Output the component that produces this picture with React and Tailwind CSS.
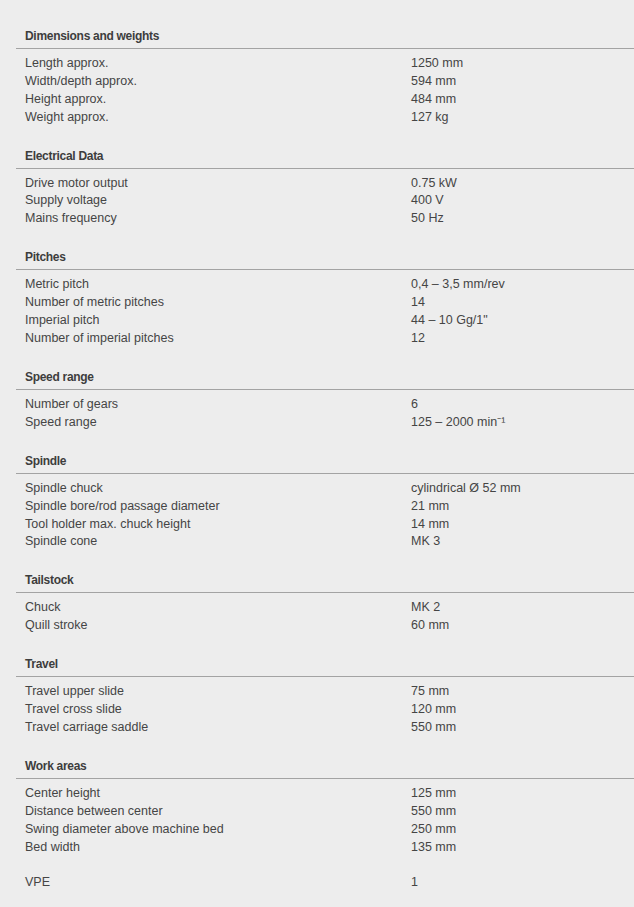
const sections = [
  {
    title: "Dimensions and weights",
    rows: [
      ["Length approx.", "1250 mm"],
      ["Width/depth approx.", "594 mm"],
      ["Height approx.", "484 mm"],
      ["Weight approx.", "127 kg"],
    ],
  },
  {
    title: "Electrical Data",
    rows: [
      ["Drive motor output", "0.75 kW"],
      ["Supply voltage", "400 V"],
      ["Mains frequency", "50 Hz"],
    ],
  },
  {
    title: "Pitches",
    rows: [
      ["Metric pitch", "0,4 – 3,5 mm/rev"],
      ["Number of metric pitches", "14"],
      ["Imperial pitch", "44 – 10 Gg/1\""],
      ["Number of imperial pitches", "12"],
    ],
  },
  {
    title: "Speed range",
    rows: [
      ["Number of gears", "6"],
      ["Speed range", "125 – 2000 min⁻¹"],
    ],
  },
  {
    title: "Spindle",
    rows: [
      ["Spindle chuck", "cylindrical Ø 52 mm"],
      ["Spindle bore/rod passage diameter", "21 mm"],
      ["Tool holder max. chuck height", "14 mm"],
      ["Spindle cone", "MK 3"],
    ],
  },
  {
    title: "Tailstock",
    rows: [
      ["Chuck", "MK 2"],
      ["Quill stroke", "60 mm"],
    ],
  },
  {
    title: "Travel",
    rows: [
      ["Travel upper slide", "75 mm"],
      ["Travel cross slide", "120 mm"],
      ["Travel carriage saddle", "550 mm"],
    ],
  },
  {
    title: "Work areas",
    rows: [
      ["Center height", "125 mm"],
      ["Distance between center", "550 mm"],
      ["Swing diameter above machine bed", "250 mm"],
      ["Bed width", "135 mm"],
    ],
  },
];

function Row({ label, value }) {
  return (
    <div className="flex h-[17.91px] items-center pl-[9px]">
      <div className="w-[386px] shrink-0">{label}</div>
      <div>{value}</div>
    </div>
  );
}

export default function App() {
  return (
    <div className="min-h-[907px] w-[634px] bg-[#ededed] pl-4 pt-[27px] text-[12.5px] leading-[18px] text-[#454545] font-['Liberation_Sans',Arial,sans-serif]">
      <div className="flex flex-col gap-[21px]">
        {sections.map((s) => (
          <section key={s.title}>
            <h3 className="border-b border-[#a3a3a3] pb-[3px] pl-[9px] text-[12px] font-bold tracking-[-0.3px] text-[#3d3d3d]">{s.title}</h3>
            <div className="pt-[5px]">
              {s.rows.map(([l, v]) => (
                <Row key={l} label={l} value={v} />
              ))}
            </div>
          </section>
        ))}
      </div>
      <div className="mt-[17px]">
        <Row label="VPE" value="1" />
      </div>
    </div>
  );
}
